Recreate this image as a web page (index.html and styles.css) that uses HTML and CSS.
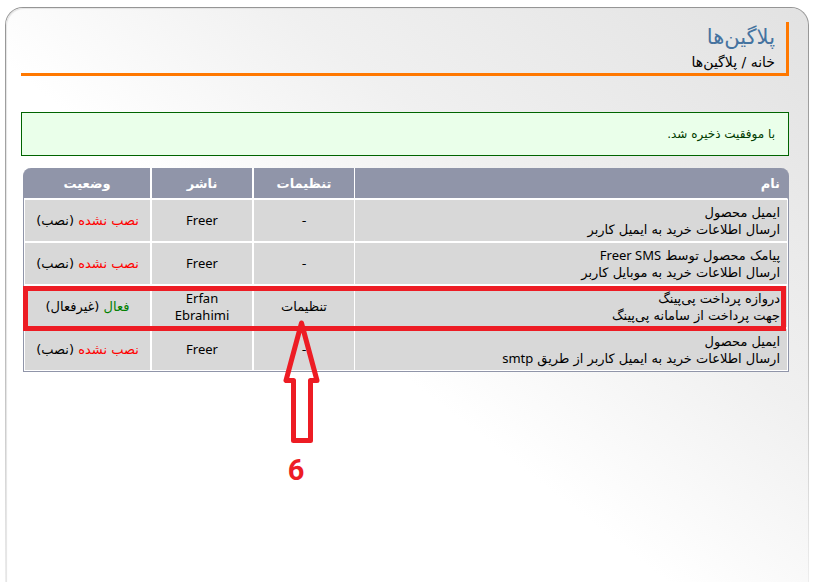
FILE: index.html
```html
<!DOCTYPE html>
<html lang="fa" dir="rtl">
<head>
<meta charset="utf-8">
<title>پلاگین‌ها</title>
<link rel="stylesheet" href="styles.css">
</head>
<body>
<main class="panel">
  <header class="page-header">
    <h1>پلاگین‌ها</h1>
    <nav><a href="#">خانه</a> / <a href="#">پلاگین‌ها</a></nav>
  </header>
  <p class="message" role="status">با موفقیت ذخیره شد.</p>
  <div class="table-frame">
    <table>
      <colgroup>
        <col>
        <col class="col-settings">
        <col class="col-publisher">
        <col class="col-status">
      </colgroup>
      <thead>
        <tr><th>نام</th><th>تنظیمات</th><th>ناشر</th><th>وضعیت</th></tr>
      </thead>
      <tbody>
        <tr>
          <td>ایمیل محصول<br>ارسال اطلاعات خرید به ایمیل کاربر</td>
          <td>-</td>
          <td lang="en">Freer</td>
          <td><span class="off">نصب نشده</span> <a href="#">(نصب)</a></td>
        </tr>
        <tr>
          <td>پیامک محصول توسط <span lang="en">Freer SMS</span><br>ارسال اطلاعات خرید به موبایل کاربر</td>
          <td>-</td>
          <td lang="en">Freer</td>
          <td><span class="off">نصب نشده</span> <a href="#">(نصب)</a></td>
        </tr>
        <tr class="marked">
          <td>دروازه پرداخت پی‌پینگ<br>جهت پرداخت از سامانه پی‌پینگ</td>
          <td class="target"><a href="#">تنظیمات</a>
            <div class="pointer">
              <svg width="38" height="126" viewBox="0 0 38 126" fill="none" stroke="#ed1c24" stroke-width="5" stroke-linejoin="round" aria-hidden="true"><path d="M18.500 3 L3 60.500 H10.500 V120.500 H27.500 V60.500 H34 Z"/></svg>
              <strong>6</strong>
            </div>
          </td>
          <td lang="en">Erfan Ebrahimi</td>
          <td><span class="on">فعال</span> <a href="#">(غیرفعال)</a></td>
        </tr>
        <tr>
          <td>ایمیل محصول<br>ارسال اطلاعات خرید به ایمیل کاربر از طریق <span lang="en">smtp</span></td>
          <td>-</td>
          <td lang="en">Freer</td>
          <td><span class="off">نصب نشده</span> <a href="#">(نصب)</a></td>
        </tr>
      </tbody>
    </table>
  </div>
</main>
</body>
</html>
```
FILE: styles.css
```css
* { box-sizing: border-box; }

body {
  margin: 7px 6px 0 5px;
  background: #fff;
  color: #000;
  font: 13px/17px "DejaVu Sans", sans-serif;
}

a { color: inherit; text-decoration: none; }

[lang="en"] { font-family: "Noto Sans", sans-serif; }

.panel {
  min-height: calc(100vh - 7px);
  padding: 14px 19px 0 15px;
  border: 1px solid transparent;
  border-bottom: 0;
  border-radius: 18px 18px 0 0;
  background:
    linear-gradient(38deg, #fff 43%, #f0f0f0 66%, #e2e2e2 100%) padding-box,
    linear-gradient(#959595, #b0b0b0 50%, #eee) border-box;
  box-shadow: inset 1px 1px 1px #e4e4e4;
}

.page-header {
  height: 54px;
  padding-right: 11px;
  border-right: 3px solid #ff7800;
  border-bottom: 3px solid #ff7800;
}

.page-header h1 {
  margin: 0;
  color: #4573a0;
  font-size: 21px;
  font-weight: normal;
  line-height: 30px;
}

.page-header nav {
  font-size: 14px;
  line-height: 20px;
}

.message {
  margin: 36px 0 12px;
  padding: 12px 13px;
  border: 1px solid #006400;
  background: #eaffea;
  color: #003c00;
  font-size: 12px;
  line-height: 18px;
}

.table-frame {
  margin-left: 2px;
  border: 1px solid #9095a9;
  border-top: 0;
  border-radius: 8px 8px 0 0;
  background: #9095a9;
}

table {
  width: 100%;
  table-layout: fixed;
  border-collapse: separate;
  border-spacing: 0;
}

.col-settings { width: 101px; }
.col-publisher { width: 102px; }
.col-status { width: 127px; }

th, td {
  padding: 0 7px;
  border: 1px solid #fff;
  text-align: center;
  vertical-align: middle;
}

th {
  height: 31px;
  border-top: 0;
  color: #fff;
  font-size: 13px;
}

td {
  height: 43px;
  background: #d8d8d8;
}

th:first-child, td:first-child { text-align: right; }
th:first-child { border-right-color: transparent; }
th:last-child { border-left: 0; }
th:nth-child(2), td:nth-child(2) { border-right: 0; }

.off { color: #f00; }
.on { color: #008000; }

.marked { position: relative; }

.marked td:first-child::after {
  content: "";
  position: absolute;
  z-index: 1;
  inset: 1px 2px -3px -1px;
  border: 5px solid #ed1c24;
}

.target { position: relative; }

.pointer {
  position: absolute;
  z-index: 2;
  top: 34px;
  left: 29px;
  width: 38px;
  color: #ed1c24;
}

.pointer svg { display: block; }

.pointer strong {
  display: block;
  padding-right: 12px;
  font: bold 29px/32px Roboto, sans-serif;
  margin-top: 8px;
}
```
